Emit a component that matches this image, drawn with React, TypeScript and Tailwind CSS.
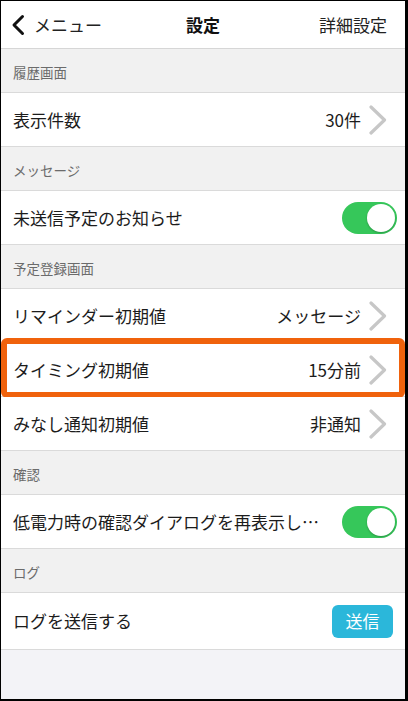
import React from "react";

const font = { fontFamily: '"Noto Sans CJK JP", "Noto Sans", sans-serif' };

function Chevron() {
  return (
    <svg width="20" height="30" viewBox="0 0 20 30" className="ml-[7px] shrink-0">
      <polyline points="3,2 16.5,15 3,28" fill="none" stroke="#c7c7c7" strokeWidth="3.2" strokeLinecap="round" strokeLinejoin="round" />
    </svg>
  );
}

function Toggle() {
  return (
    <div className="ml-[14px] flex h-[32px] w-[55px] shrink-0 items-center justify-end rounded-full bg-[#36c75a] pr-[2px]">
      <div className="h-[28px] w-[28px] rounded-full bg-white shadow-[0_1px_2px_rgba(0,0,0,0.25)]" />
    </div>
  );
}

function Section({ title }: { title: string }) {
  return (
    <div className="flex h-[44px] items-end border-b border-[#dadada] bg-[#f1f1f1] pb-[10px] pl-[12px] text-[13.5px] text-[#6b6b6b]">
      {title}
    </div>
  );
}

function Row({
  label,
  value,
  right,
  highlight,
  tall,
  pad = "pr-[8px]",
}: {
  label: string;
  value?: string;
  right?: React.ReactNode;
  highlight?: boolean;
  tall?: boolean;
  pad?: string;
}) {
  return (
    <div
      className={`relative flex items-center border-b border-[#dadada] bg-white pl-[12px] ${
        tall ? "h-[57px]" : "h-[54px]"
      } ${value ? "pr-[17px]" : pad}`}
    >
      <div className="min-w-0 flex-1 truncate text-[17px] text-[#1c1c1c]">{label}</div>
      {value && (
        <div className="flex items-center">
          <span className="text-[17px] text-[#1c1c1c]">{value}</span>
          <Chevron />
        </div>
      )}
      {right}
      {highlight && (
        <div className="absolute inset-x-0 bottom-[-2px] top-[-5px] rounded-[6px] border-[6px] border-[#f0620c]" />
      )}
    </div>
  );
}

export default function App() {
  return (
    <div
      style={font}
      className="flex h-[701px] w-[408px] flex-col overflow-hidden border-b-2 border-l border-r-[3px] border-t border-black bg-[#f3f3f7]"
    >
      {/* Nav bar */}
      <div className="relative flex h-[48px] shrink-0 items-center border-b border-[#d6d6d6] bg-white">
        <div className="flex items-center pl-[9px]">
          <svg width="16" height="22" viewBox="0 0 16 22">
            <polyline points="12.5,2.5 4,11 12.5,19.5" fill="none" stroke="#111" strokeWidth="3" strokeLinecap="round" strokeLinejoin="round" />
          </svg>
          <span className="ml-[8px] text-[17px] text-[#222]">メニュー</span>
        </div>
        <div className="absolute left-0 right-0 text-center text-[17px] font-bold text-[#111]">設定</div>
        <div className="ml-auto pr-[18px] text-[17px] text-[#222]">詳細設定</div>
      </div>

      <Section title="履歴画面" />
      <Row label="表示件数" value="30件" />

      <Section title="メッセージ" />
      <Row label="未送信予定のお知らせ" right={<Toggle />} />

      <Section title="予定登録画面" />
      <Row label="リマインダー初期値" value="メッセージ" />
      <Row label="タイミング初期値" value="15分前" highlight />
      <Row label="みなし通知初期値" value="非通知" />

      <Section title="確認" />
      <Row label="低電力時の確認ダイアログを再表示しない" right={<Toggle />} />

      <Section title="ログ" />
      <Row
        label="ログを送信する"
        tall
        pad="pr-[12px]"
        right={
          <button className="flex h-[33px] w-[61px] items-center justify-center rounded-[6px] bg-[#2bb7da] text-[17px] text-white">
            送信
          </button>
        }
      />
    </div>
  );
}
